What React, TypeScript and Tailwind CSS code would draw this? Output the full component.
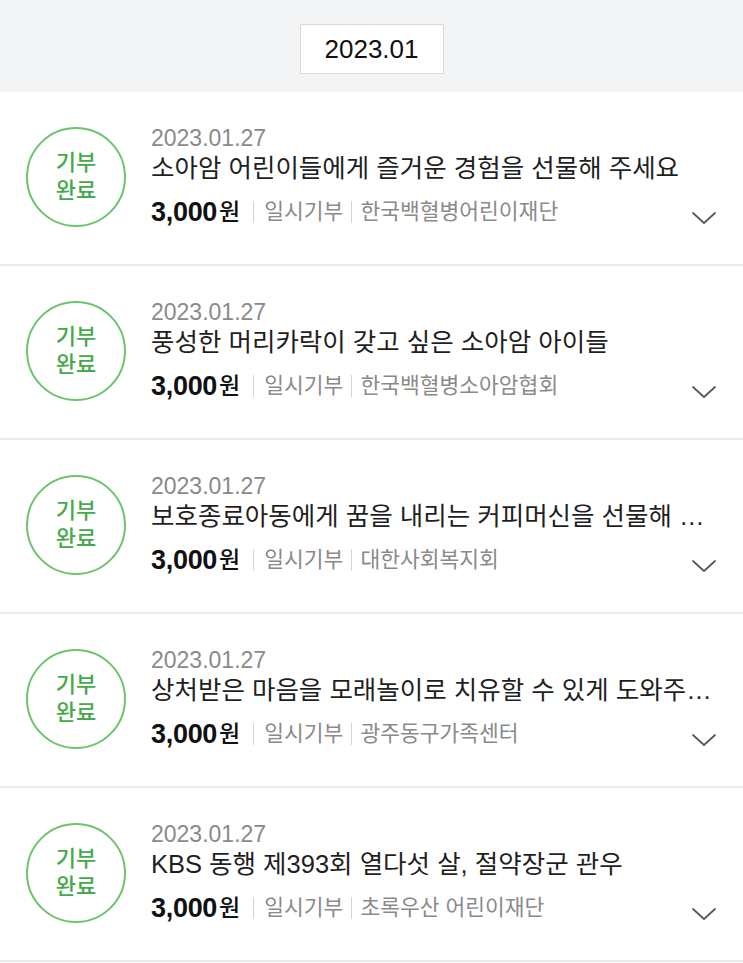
const items = [
  { title: "소아암 어린이들에게 즐거운 경험을 선물해 주세요", org: "한국백혈병어린이재단" },
  { title: "풍성한 머리카락이 갖고 싶은 소아암 아이들", org: "한국백혈병소아암협회" },
  { title: "보호종료아동에게 꿈을 내리는 커피머신을 선물해 주세요", org: "대한사회복지회" },
  { title: "상처받은 마음을 모래놀이로 치유할 수 있게 도와주세요", org: "광주동구가족센터" },
  { title: "KBS 동행 제393회 열다섯 살, 절약장군 관우", org: "초록우산 어린이재단" },
];

function Chevron() {
  return (
    <svg width="26" height="16" viewBox="0 0 26 16" fill="none" className="ml-auto mt-[12px] mr-[-2px] shrink-0">
      <path d="M2 3 L13 13 L24 3" stroke="#555" strokeWidth="1.7" strokeLinecap="round" strokeLinejoin="round" />
    </svg>
  );
}

function DonationRow({ title, org }: { title: string; org: string }) {
  return (
    <li className="flex h-[174px] items-center border-b-2 border-[#ebebeb] pl-[26px] pr-[28px]">
      <div className="mb-[2px] flex h-[100px] w-[100px] shrink-0 flex-col items-center justify-center rounded-full border-2 border-[#6cc46f] text-[22px] font-medium leading-[28px] text-[#46a94b]">
        <span>기부</span>
        <span>완료</span>
      </div>
      <div className="mb-[4px] ml-[25px] flex min-w-0 flex-1 flex-col">
        <p className="text-[23px] leading-[28px] text-[#8a8a8a]">2023.01.27</p>
        <p className="truncate text-[25.5px] leading-[32px] text-[#1f1f1f]">{title}</p>
        <div className="mt-[12px] flex items-center">
          <span className="text-[27px] font-bold leading-[32px] tracking-[-0.3px] text-[#111]">3,000</span>
          <span className="ml-[2px] text-[23px] font-medium leading-[32px] text-[#111]">원</span>
          <span className="ml-[13px] mr-[10px] h-[22px] w-px bg-[#d6d6d6]" />
          <span className="text-[21.5px] leading-[32px] text-[#8a8a8a]">일시기부</span>
          <span className="mx-[8px] h-[22px] w-px bg-[#d6d6d6]" />
          <span className="text-[21.5px] leading-[32px] text-[#8a8a8a]">{org}</span>
          <Chevron />
        </div>
      </div>
    </li>
  );
}

export default function App() {
  return (
    <div className="min-h-[963px] bg-white font-['Liberation_Sans','Noto_Sans_CJK_KR',sans-serif]">
      <header className="flex h-[92px] items-center justify-center bg-[#f3f4f6] pt-[6px]">
        <div className="flex h-[50px] w-[144px] items-center justify-center border border-[#dadada] bg-white text-[26px] text-[#111]">
          2023.01
        </div>
      </header>
      <ul>
        {items.map((item) => (
          <DonationRow key={item.title} title={item.title} org={item.org} />
        ))}
      </ul>
    </div>
  );
}
